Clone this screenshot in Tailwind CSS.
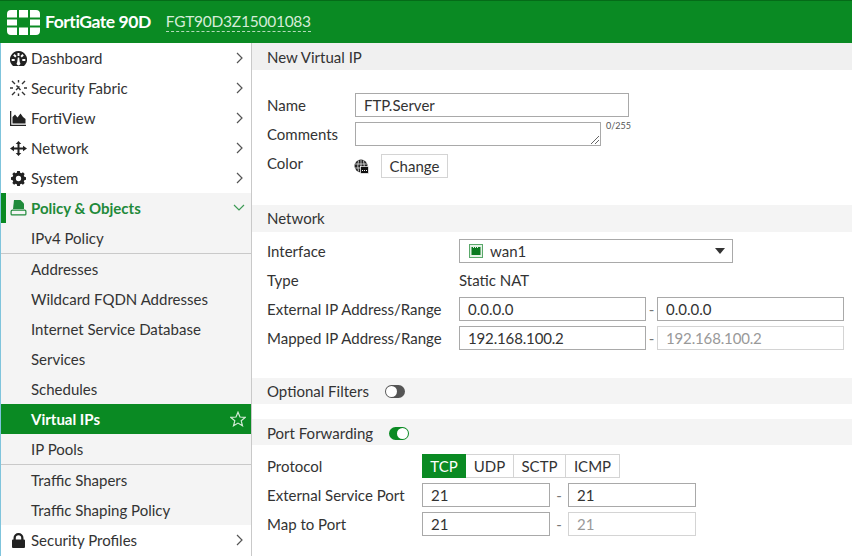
<!DOCTYPE html>
<html lang="en">
<head>
  <meta charset="UTF-8" />
  <meta name="viewport" content="width=device-width, initial-scale=1.0" />
  <title>New Virtual IP</title>
  <script src="https://cdn.jsdelivr.net/npm/@tailwindcss/browser@4"></script>
</head>
<body class="w-[852px] h-[556px] overflow-hidden bg-white font-['Lato',sans-serif] text-[15px] text-[#333]">

  <!-- Top bar -->
  <header class="h-[43px] bg-[#0a8a23] border-t border-[#056b18] flex items-center pl-[7px] text-white">
    <svg width="33" height="25" viewBox="0 0 33 25" fill="#fff" class="shrink-0">
      <path d="M10 0H4Q0 0 0 4V7.500H10Z M12 0H21V7.500H12Z M23 0H29Q33 0 33 4V7.500H23Z M0 9.500H10V15.500H0Z M23 9.500H33V15.500H23Z M0 17.500H10V25H4Q0 25 0 21Z M12 17.500H21V25H12Z M23 17.500H33V21Q33 25 29 25H23Z"/>
    </svg>
    <span class="ml-[5px] text-[17.5px] font-bold tracking-[-0.45px]">FortiGate 90D</span>
    <span class="ml-[15px] text-[15.5px] tracking-[-0.25px] text-[#d5ecd8] border-b border-dashed border-[#b5dcbb] leading-[19px]">FGT90D3Z15001083</span>
  </header>

  <div class="flex h-[513px]">
    <!-- Sidebar -->
    <nav class="w-[252px] shrink-0 border-l border-l-[#7fc4dc] border-r border-r-[#c9c9c9] bg-white">
      <a class="h-[30px] flex items-center pl-[9px] pr-[7px]">
        <svg width="17" height="15" viewBox="0 0 17 15" fill="#222"><path fill-rule="evenodd" d="M8.500 0A8.500 8.500 0 0 0 1.700 13.600L3 15h11l1.300-1.400A8.500 8.500 0 0 0 8.500 0ZM7.500 2h2v3h-2ZM3.200 4.500l1.400-1.400 2 2-1.400 1.400ZM12.400 3.100l1.400 1.400-2 2-1.400-1.400ZM1.700 8h3v2h-3ZM12.300 8h3v2h-3ZM7.200 11.300 7.800 6.500h1.400l.6 4.800a1.800 1.800 0 1 1-2.600 0Z"/></svg>
        <span class="ml-[4px] flex-1">Dashboard</span>
        <svg width="8" height="12" viewBox="0 0 8 12" fill="none" stroke="#555" stroke-width="1.200"><path d="M1 1 6 6 1 11"/></svg>
      </a>
      <a class="h-[30px] flex items-center pl-[9px] pr-[7px]">
        <svg width="17" height="16" viewBox="0 0 17 16" fill="none" stroke="#333" stroke-width="1.400"><path d="M2 1 5 4M15 1l-3 3M2 15l3-3M15 15l-3-3M6 10 9.500 6.500M6.500 5.500l4 4.500M8.500 0v2.500M8.500 13.500V16M0 8h3M14 8h3"/></svg>
        <span class="ml-[4px] flex-1">Security Fabric</span>
        <svg width="8" height="12" viewBox="0 0 8 12" fill="none" stroke="#555" stroke-width="1.200"><path d="M1 1 6 6 1 11"/></svg>
      </a>
      <a class="h-[30px] flex items-center pl-[9px] pr-[7px]">
        <svg width="17" height="15" viewBox="0 0 17 15" fill="#222"><path d="M0 0h1.300v13.700H16V15H0Z"/><path d="M2.500 12.500V6l2.500-2.500 2.500 3 3-4 2.500 3.500 2.500 2v4.500Z"/></svg>
        <span class="ml-[4px] flex-1">FortiView</span>
        <svg width="8" height="12" viewBox="0 0 8 12" fill="none" stroke="#555" stroke-width="1.200"><path d="M1 1 6 6 1 11"/></svg>
      </a>
      <a class="h-[30px] flex items-center pl-[9px] pr-[7px]">
        <svg width="17" height="15" viewBox="0 0 17 15" fill="#222"><path d="M8.500 0 11.300 3H9.500v3.500H13V4.700L17 7.500l-4 2.800V8.500H9.500V12h1.800l-2.800 3-2.800-3h1.800V8.500H4v1.800L0 7.500l4-2.800v1.800h3.500V3H5.700Z"/></svg>
        <span class="ml-[4px] flex-1">Network</span>
        <svg width="8" height="12" viewBox="0 0 8 12" fill="none" stroke="#555" stroke-width="1.200"><path d="M1 1 6 6 1 11"/></svg>
      </a>
      <a class="h-[30px] flex items-center pl-[9px] pr-[7px]">
        <svg width="17" height="15" viewBox="0 0 17 17" fill="#222"><path fill-rule="evenodd" d="M7 0h3l.4 1.900 1.400.6 1.700-1 2 2-1 1.700.6 1.400 1.900.4v3l-1.900.4-.6 1.400 1 1.700-2 2-1.700-1-1.400.6L10 17H7l-.4-1.900-1.400-.6-1.700 1-2-2 1-1.700-.6-1.400L0 10V7l1.900-.4.600-1.400-1-1.700 2-2 1.700 1 1.400-.6ZM8.500 5.500a3 3 0 1 0 0 6 3 3 0 0 0 0-6Z"/></svg>
        <span class="ml-[4px] flex-1">System</span>
        <svg width="8" height="12" viewBox="0 0 8 12" fill="none" stroke="#555" stroke-width="1.200"><path d="M1 1 6 6 1 11"/></svg>
      </a>

      <!-- Expanded group -->
      <div class="bg-[#f4f4f4]">
        <a class="relative h-[30px] flex items-center pl-[9px] pr-[6px] font-bold text-[#1f8a3a]">
          <span class="absolute left-0 top-0 w-[5px] h-[30px] bg-[#0a8a23]"></span>
          <svg width="17" height="16" viewBox="0 0 17 16" fill="#1f8a3a"><path d="M4 0h6.500L14 3.500V9H3Z"/><path fill-rule="evenodd" d="M2.500 9.500h12.500a1.800 1.800 0 0 1 1.500 2V14a1.500 1.500 0 0 1-1.500 1.500H2A1.500 1.500 0 0 1 .5 14v-2.500a2 2 0 0 1 2-2Zm0 1.300a1 1 0 0 0-.8.800V14.200H15.300V11.500a.8.800 0 0 0-.5-.7Z"/></svg>
          <span class="ml-[4px] flex-1">Policy &amp; Objects</span>
          <svg width="12" height="8" viewBox="0 0 12 8" fill="none" stroke="#3c9a55" stroke-width="1.200"><path d="M1 1 6 6 11 1"/></svg>
        </a>
        <a class="h-[30px] flex items-center pl-[30px]">IPv4 Policy</a>
        <div class="border-t border-[#c9c9c9]"></div>
        <a class="h-[30px] flex items-center pl-[30px]">Addresses</a>
        <a class="h-[30px] flex items-center pl-[30px]">Wildcard FQDN Addresses</a>
        <a class="h-[30px] flex items-center pl-[30px]">Internet Service Database</a>
        <a class="h-[30px] flex items-center pl-[30px]">Services</a>
        <a class="h-[30px] flex items-center pl-[30px]">Schedules</a>
        <a class="h-[30px] flex items-center pl-[30px] pr-[5px] bg-[#0a8a23] text-white font-bold">
          <span class="flex-1">Virtual IPs</span>
          <svg width="16" height="16" viewBox="0 0 16 16" fill="none" stroke="#d5ecd8" stroke-width="1.200"><path d="M8 1.200 10 6l5.200.4-4 3.400 1.300 5L8 12.100 3.500 14.800l1.300-5-4-3.400L6 6Z"/></svg>
        </a>
        <a class="h-[30px] flex items-center pl-[30px]">IP Pools</a>
        <div class="border-t border-[#c9c9c9]"></div>
        <a class="h-[30px] flex items-center pl-[30px]">Traffic Shapers</a>
        <a class="h-[30px] flex items-center pl-[30px]">Traffic Shaping Policy</a>
      </div>

      <a class="h-[30px] flex items-center pl-[9px] pr-[7px]">
        <svg width="17" height="15" viewBox="0 0 17 15" fill="#222"><path fill-rule="evenodd" d="M3.500 6.500V5a5 5 0 0 1 10 0v1.500h.5a1 1 0 0 1 1 1V14a1 1 0 0 1-1 1H3a1 1 0 0 1-1-1V7.500a1 1 0 0 1 1-1Zm2.300 0h5.400V5a2.700 2.700 0 0 0-5.400 0Z"/></svg>
        <span class="ml-[4px] flex-1">Security Profiles</span>
        <svg width="8" height="12" viewBox="0 0 8 12" fill="none" stroke="#555" stroke-width="1.200"><path d="M1 1 6 6 1 11"/></svg>
      </a>
    </nav>

    <!-- Main form -->
    <main class="flex-1 min-w-0">
      <div class="h-[27px] pt-[1px] bg-[#f0f0f0] flex items-center pl-[15px]">New Virtual IP</div>

      <div class="pl-[15px] pt-[23px]">
        <div class="flex items-center h-[24px]">
          <span class="w-[88px]">Name</span>
          <div class="w-[274px] h-[24px] border border-[#a9a9a9] pl-[8px] leading-[22px]">FTP.Server</div>
        </div>
        <div class="flex items-center h-[24px] mt-[5px]">
          <span class="w-[88px]">Comments</span>
          <div class="relative w-[246px] h-[24px] border border-[#a9a9a9]">
            <svg class="absolute right-0 bottom-0" width="10" height="10" viewBox="0 0 10 10" stroke="#666" fill="none"><path d="M1 9 9 1M5 9 9 5"/></svg>
            <span class="absolute left-[250px] -top-[4px] text-[9px] text-[#555]">0/255</span>
          </div>
        </div>
        <div class="flex items-center h-[24px] mt-[8px]">
          <span class="w-[87px] -mt-[6px]">Color</span>
          <svg width="15" height="15" viewBox="0 0 15 15" class="shrink-0">
            <circle cx="7" cy="7" r="6.500" fill="#222"/>
            <path d="M1 5h12M1 9h12M7 1v12M4.500 1.500Q3 7 4.500 12.500M9.500 1.500Q11 7 9.500 12.500" stroke="#fff" stroke-width=".7" fill="none"/>
            <rect x="6.500" y="7.500" width="8" height="7" fill="#111" stroke="#fff" stroke-width=".7"/>
            <path d="M8 11.500h1M10 11.500h1M12 11.500h1" stroke="#fff"/>
          </svg>
          <div class="ml-[12px] h-[24px] w-[67px] border border-[#d4d4d4] flex items-center justify-center">Change</div>
        </div>
      </div>

      <div class="h-[27px] bg-[#f4f4f4] flex items-center pl-[15px] mt-[27px]">Network</div>

      <div class="pl-[15px] pt-[7px]">
        <div class="flex items-center h-[24px]">
          <span class="w-[192px]">Interface</span>
          <div class="w-[274px] h-[24px] border border-[#a9a9a9] flex items-center pl-[9px] pr-[7px]">
            <svg width="14" height="14" viewBox="0 0 14 14" class="shrink-0"><rect x=".5" y=".5" width="13" height="13" fill="#e4f2e6" stroke="#5aa86a"/><path d="M2.500 3h1.500v1H5V3h1v1h1V3h1v1h1V3h2.500v8h-9Z" fill="#0a7a1f"/></svg>
            <span class="ml-[7px] flex-1">wan1</span>
            <svg width="10" height="6" viewBox="0 0 10 6" fill="#333"><path d="M0 0h10L5 6Z"/></svg>
          </div>
        </div>
        <div class="flex items-center h-[24px] mt-[5px]">
          <span class="w-[192px]">Type</span>
          <span>Static NAT</span>
        </div>
        <div class="flex items-center h-[24px] mt-[5px]">
          <span class="w-[192px]">External IP Address/Range</span>
          <div class="w-[187px] h-[24px] border border-[#a9a9a9] pl-[8px] leading-[22px]">0.0.0.0</div>
          <span class="w-[11px] text-center text-[#777]">-</span>
          <div class="w-[187px] h-[24px] border border-[#a9a9a9] pl-[8px] leading-[22px]">0.0.0.0</div>
        </div>
        <div class="flex items-center h-[24px] mt-[5px]">
          <span class="w-[192px]">Mapped IP Address/Range</span>
          <div class="w-[187px] h-[24px] border border-[#a9a9a9] pl-[8px] leading-[22px] tracking-[-0.15px]">192.168.100.2</div>
          <span class="w-[11px] text-center text-[#777]">-</span>
          <div class="w-[187px] h-[24px] border border-[#d4d4d4] pl-[8px] leading-[22px] tracking-[-0.15px] text-[#999]">192.168.100.2</div>
        </div>
      </div>

      <div class="h-[26px] bg-[#f4f4f4] flex items-center pl-[15px] mt-[28px]">
        Optional Filters
        <span class="ml-[16px] w-[20px] h-[13px] rounded-full bg-[#555] flex items-center pl-[1px]"><span class="w-[11px] h-[11px] rounded-full bg-white"></span></span>
      </div>

      <div class="h-[26px] pt-[2px] bg-[#f4f4f4] flex items-center pl-[15px] mt-[15px]">
        Port Forwarding
        <span class="ml-[16px] w-[20px] h-[13px] rounded-full bg-[#0a8a23] flex items-center justify-end pr-[1px]"><span class="w-[11px] h-[11px] rounded-full bg-white"></span></span>
      </div>

      <div class="pl-[15px] pt-[9px]">
        <div class="flex items-center h-[24px]">
          <span class="w-[155px]">Protocol</span>
          <div class="flex h-[24px]">
            <div class="w-[44px] bg-[#0a8a23] text-white flex items-center justify-center">TCP</div>
            <div class="w-[48px] border-y border-r border-[#d4d4d4] flex items-center justify-center">UDP</div>
            <div class="w-[52px] border-y border-r border-[#d4d4d4] flex items-center justify-center">SCTP</div>
            <div class="w-[54px] border-y border-r border-[#d4d4d4] flex items-center justify-center">ICMP</div>
          </div>
        </div>
        <div class="flex items-center h-[24px] mt-[5px]">
          <span class="w-[155px]">External Service Port</span>
          <div class="w-[128px] h-[24px] border border-[#a9a9a9] pl-[8px] leading-[22px]">21</div>
          <span class="w-[18px] text-center text-[#777]">-</span>
          <div class="w-[128px] h-[24px] border border-[#a9a9a9] pl-[8px] leading-[22px]">21</div>
        </div>
        <div class="flex items-center h-[24px] mt-[5px]">
          <span class="w-[155px]">Map to Port</span>
          <div class="w-[128px] h-[24px] border border-[#a9a9a9] pl-[8px] leading-[22px]">21</div>
          <span class="w-[18px] text-center text-[#777]">-</span>
          <div class="w-[128px] h-[24px] border border-[#d4d4d4] pl-[8px] leading-[22px] text-[#999]">21</div>
        </div>
      </div>
    </main>
  </div>

</body>
</html>
